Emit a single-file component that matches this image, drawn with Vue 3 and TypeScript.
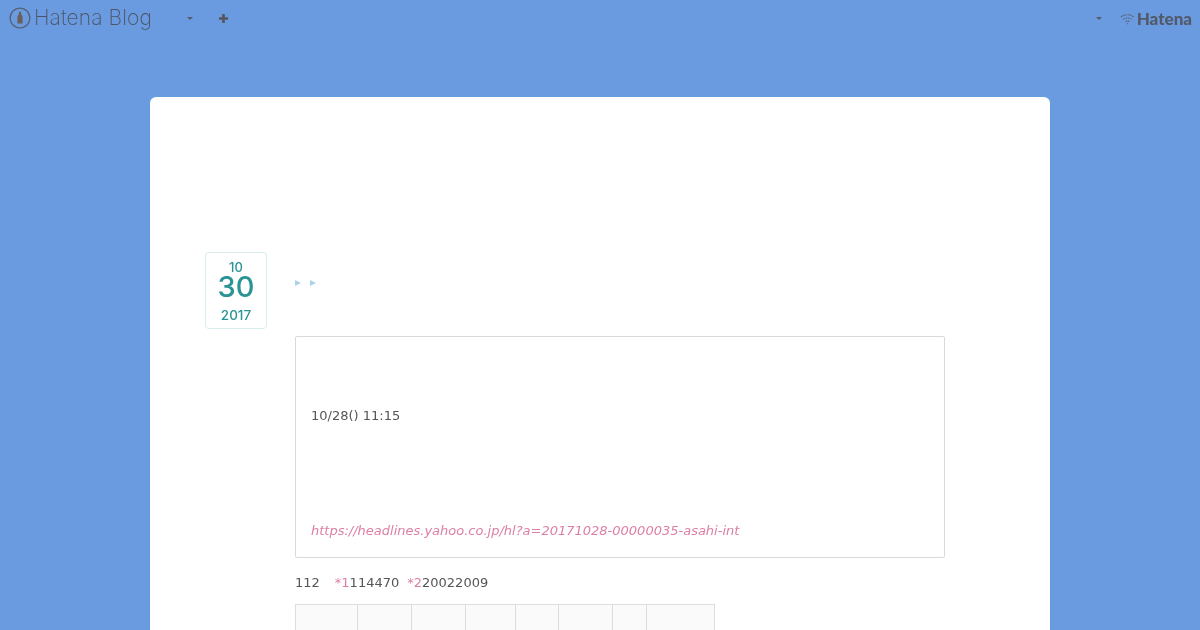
<script setup lang="ts">
const columns: number[] = [62, 54, 54, 50, 43, 54, 34, 68];
</script>

<template>
  <div class="page">
    <header class="topbar">
      <div class="left">
        <svg class="logo" width="22" height="22" viewBox="0 0 22 22">
          <circle cx="11" cy="11" r="9.9" fill="none" stroke="#56606f" stroke-width="1.3" />
          <path d="M9.9 4.8h2.2v2.6c1 .8 1.5 1.7 1.5 2.9v6.2H8.400v-6.200c0-1.200.5-2.100 1.500-2.900z" fill="#6b5f5c" />
        </svg>
        <span class="brand">Hatena Blog</span>
        <span class="caret first"></span>
        <span class="plus">
          <svg width="11" height="11" viewBox="0 0 11 11"><path d="M5.500 1v9M1 5.500h9" stroke="#56565c" stroke-width="2.600" fill="none" /></svg>
        </span>
      </div>
      <div class="right">
        <span class="caret"></span>
        <svg class="wifi" width="15" height="12" viewBox="0 0 15 12">
          <path d="M1 4C4.500 1 10.500 1 14 4M3.500 6.300c2.500-1.800 5.500-1.800 8 0M5.800 8.600c1.200-.7 2.200-.7 3.400 0M7 10.800h1" fill="none" stroke="#56606f" stroke-width="1.100" stroke-dasharray="1.600 .8" />
        </svg>
        <span class="hatena">Hatena</span>
      </div>
    </header>
    <main class="card">
      <section class="entry">
        <div class="date">
          <span class="month">10</span>
          <span class="day">30</span>
          <span class="year">2017</span>
        </div>
        <div class="body">
          <div class="crumbs"><span class="tri"></span><span class="tri"></span></div>
          <blockquote class="quote">
            <p class="time">10/28() 11:15</p>
            <p class="link">https://headlines.yahoo.co.jp/hl?a=20171028-00000035-asahi-int</p>
          </blockquote>
          <p class="notes">112<span class="note first-note"><em>*1</em>114470</span><span class="note"><em>*2</em>20022009</span></p>
          <div class="table">
            <div v-for="(w, i) in columns" :key="i" class="cell" :style="{ width: w + 'px' }"></div>
          </div>
        </div>
      </section>
    </main>
  </div>
</template>

<style>
html, body {
  margin: 0;
  height: 630px;
  overflow: hidden;
  background: #6a9ae0;
}
</style>

<style scoped>
.page {
  height: 630px;
  overflow: hidden;
  font-family: "DejaVu Sans", sans-serif;
  color: #555;
  will-change: transform;
}
.topbar {
  height: 37px;
  display: flex;
  justify-content: space-between;
  align-items: center;
  padding: 0 0 0 8px;
}
.left, .right {
  display: flex;
  align-items: center;
}
.logo {
  margin: -1px 0 0 1px;
}
.brand {
  margin-left: 3px;
  margin-bottom: 2px;
  width: 118px;
  font-family: "Inter", sans-serif;
  font-size: 21px;
  font-weight: 200;
  line-height: 34px;
  letter-spacing: .1px;
  color: #4c5566;
  white-space: nowrap;
}
.caret {
  width: 0;
  height: 0;
  border-left: 3px solid transparent;
  border-right: 3px solid transparent;
  border-top: 3px solid #555c68;
}
.first {
  margin-left: 35px;
}
.plus {
  display: flex;
  margin: -1px 0 0 25px;
}
.wifi {
  margin-left: 18px;
}
.hatena {
  margin: 0 8px 0 2px;
  font-family: "Lato", sans-serif;
  font-size: 17px;
  font-weight: 900;
  color: #525a68;
}
.card {
  width: 900px;
  height: 533px;
  margin: 60px auto 0;
  background: #fff;
  border-radius: 6px 6px 0 0;
  box-sizing: border-box;
  padding: 155px 105px 0 55px;
  overflow: hidden;
}
.entry {
  display: flex;
  gap: 28px;
}
.date {
  width: 62px;
  height: 77px;
  box-sizing: border-box;
  border: 1px solid #d8eeee;
  border-radius: 4px;
  color: #2a9494;
  display: flex;
  flex-direction: column;
  align-items: center;
  font-family: "Inter", sans-serif;
  padding-top: 6px;
}
.month { font-size: 13px; line-height: 16px; font-weight: 500; }
.day { font-size: 29px; line-height: 27px; margin-top: -2px; font-weight: 500; }
.year { font-size: 13.500px; line-height: 20px; margin-top: 5px; font-weight: 500; }
.body {
  width: 650px;
}
.crumbs {
  height: 84px;
  display: flex;
  align-items: flex-start;
  gap: 9px;
  padding-top: 28px;
  box-sizing: border-box;
}
.tri {
  width: 0;
  height: 0;
  border-top: 3.5px solid transparent;
  border-bottom: 3.5px solid transparent;
  border-left: 6px solid #a9d3ea;
}
.quote {
  margin: 0;
  height: 222px;
  box-sizing: border-box;
  border: 1px solid #d9d9d9;
  border-radius: 2px;
  padding: 0 15px;
  font-size: 13px;
}
.time {
  margin: 0;
  padding-top: 71px;
  line-height: 15px;
}
.link {
  margin: 100px 0 0;
  font-style: italic;
  color: #dc7fa6;
  line-height: 15px;
}
.notes {
  margin: 17px 0 0;
  font-size: 13px;
  line-height: 15px;
}
.note em {
  font-style: normal;
  color: #dc7fa6;
}
.first-note { margin-left: 15px; }
.note + .note { margin-left: 8px; }
.table {
  margin-top: 14px;
  display: flex;
  width: fit-content;
  border: 1px solid #ddd;
  border-right: 0;
  box-sizing: border-box;
}
.cell {
  height: 40px;
  background: #fafafa;
  border-right: 1px solid #ddd;
  box-sizing: border-box;
}
</style>
